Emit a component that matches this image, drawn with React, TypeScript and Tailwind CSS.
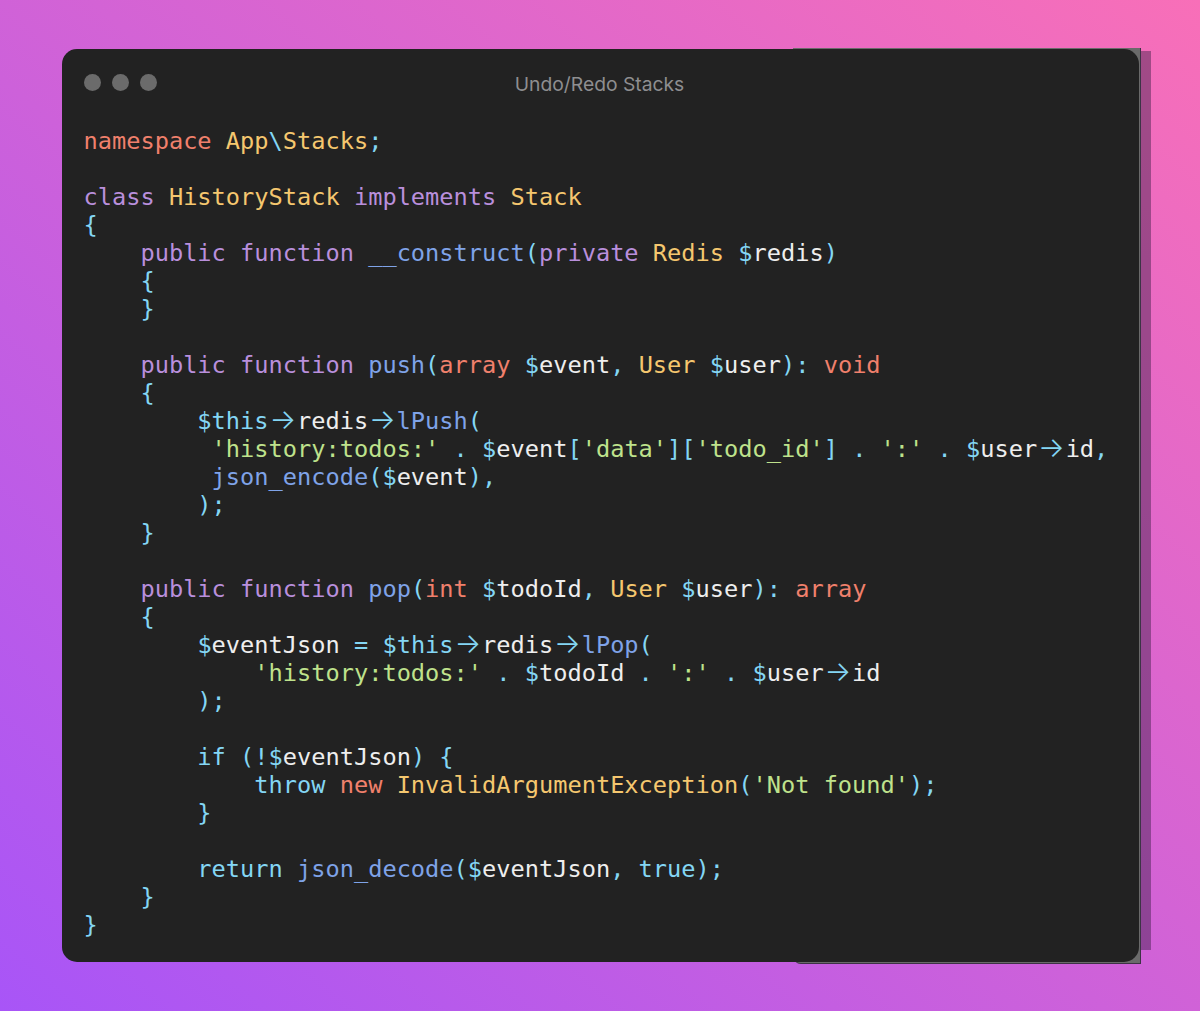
const colors = {
  k: "text-[#b98fdc]", // keywords
  t: "text-[#f0806c]", // namespace, types
  y: "text-[#f5c76f]", // class names
  c: "text-[#84d6f4]", // punctuation
  f: "text-[#7fa3e8]", // functions
  s: "text-[#bfe28c]", // strings
  w: "text-[#eeeeee]", // variables
}

type Color = keyof typeof colors
type Token = [string, Color] | "arrow"

const variable = (name: string): Token[] => [["$", "c"], [name, "w"]]

const lines: Token[][] = [
  [["namespace", "t"], [" ", "w"], ["App", "y"], ["\\", "c"], ["Stacks", "y"], [";", "c"]],
  [],
  [["class", "k"], [" ", "w"], ["HistoryStack", "y"], [" ", "w"], ["implements", "k"], [" ", "w"], ["Stack", "y"]],
  [["{", "c"]],
  [["    public function", "k"], [" ", "w"], ["__construct", "f"], ["(", "c"], ["private", "k"], [" ", "w"], ["Redis", "y"], [" ", "w"], ...variable("redis"), [")", "c"]],
  [["    {", "c"]],
  [["    }", "c"]],
  [],
  [["    public function", "k"], [" ", "w"], ["push", "f"], ["(", "c"], ["array", "t"], [" ", "w"], ...variable("event"), [", ", "c"], ["User", "y"], [" ", "w"], ...variable("user"), ["): ", "c"], ["void", "t"]],
  [["    {", "c"]],
  [["        $this", "c"], "arrow", ["redis", "w"], "arrow", ["lPush", "f"], ["(", "c"]],
  [["         ", "w"], ["'history:todos:'", "s"], [" . ", "c"], ...variable("event"), ["[", "c"], ["'data'", "s"], ["][", "c"], ["'todo_id'", "s"], ["]", "c"], [" . ", "c"], ["':'", "s"], [" . ", "c"], ...variable("user"), "arrow", ["id", "w"], [",", "c"]],
  [["         ", "w"], ["json_encode", "f"], ["(", "c"], ...variable("event"), ["),", "c"]],
  [["        );", "c"]],
  [["    }", "c"]],
  [],
  [["    public function", "k"], [" ", "w"], ["pop", "f"], ["(", "c"], ["int", "t"], [" ", "w"], ...variable("todoId"), [", ", "c"], ["User", "y"], [" ", "w"], ...variable("user"), ["): ", "c"], ["array", "t"]],
  [["    {", "c"]],
  [["        ", "w"], ...variable("eventJson"), [" = ", "c"], ["$this", "c"], "arrow", ["redis", "w"], "arrow", ["lPop", "f"], ["(", "c"]],
  [["            ", "w"], ["'history:todos:'", "s"], [" . ", "c"], ...variable("todoId"), [" . ", "c"], ["':'", "s"], [" . ", "c"], ...variable("user"), "arrow", ["id", "w"]],
  [["        );", "c"]],
  [],
  [["        if (!", "c"], ...variable("eventJson"), [") {", "c"]],
  [["            throw", "c"], [" ", "w"], ["new", "t"], [" ", "w"], ["InvalidArgumentException", "y"], ["(", "c"], ["'Not found'", "s"], [");", "c"]],
  [["        }", "c"]],
  [],
  [["        return", "c"], [" ", "w"], ["json_decode", "f"], ["(", "c"], ...variable("eventJson"), [", ", "c"], ["true", "c"], [");", "c"]],
  [["    }", "c"]],
  [["}", "c"]],
]

function CodeLine({ tokens }: { tokens: Token[] }) {
  return (
    <div className="h-7 whitespace-pre">
      {tokens.map((token, i) =>
        token === "arrow" ? (
          // the font ligature for -> spans two cells
          <span key={i} className="inline-block h-0 w-[2ch] leading-[0]">
            <span className="inline-block w-full text-center font-['Inter',sans-serif] text-[28px] font-light leading-[0] text-[#84d6f4]">→</span>
          </span>
        ) : (
          <span key={i} className={colors[token[1]]}>
            {token[0]}
          </span>
        ),
      )}
    </div>
  )
}

export default function App() {
  return (
    <div className="h-[1011px] w-full overflow-hidden bg-linear-to-tr/srgb from-[#a855f7] to-[#f86fb8] pl-[62px] pt-[49px]">
      <div className="relative h-[913px] w-[1077px]">
        {/* Misaligned layer peeking out behind the right part of the window */}
        <div className="absolute -bottom-[2px] -right-[2px] -top-[1px] left-[731px] rounded-bl-lg border-b border-r border-[#3d3346] bg-[#6a6a6a]" />
        <div className="absolute -right-[12px] bottom-[12px] top-[2px] w-[10px] bg-[#3c1e46]/45" />

        <div className="relative h-full rounded-[15px] bg-[#222222] px-[22px]">
          <div className="grid h-[78px] grid-cols-[1fr_auto_1fr] pt-[25px]">
            <div className="flex h-[17px] gap-[11px]">
              <span className="h-[17px] w-[17px] rounded-full bg-[#6b6b6b]" />
              <span className="h-[17px] w-[17px] rounded-full bg-[#6b6b6b]" />
              <span className="h-[17px] w-[17px] rounded-full bg-[#6b6b6b]" />
            </div>
            <div className="-mt-[2px] pr-[2px] font-['Inter',sans-serif] text-[19.3px] leading-[24px] text-[#8e8e90]">Undo/Redo Stacks</div>
          </div>
          <div className="-ml-[0.5px] font-['DejaVu_Sans_Mono',monospace] text-[23.65px] leading-7">
            {lines.map((tokens, i) => (
              <CodeLine key={i} tokens={tokens} />
            ))}
          </div>
        </div>
      </div>
    </div>
  )
}
